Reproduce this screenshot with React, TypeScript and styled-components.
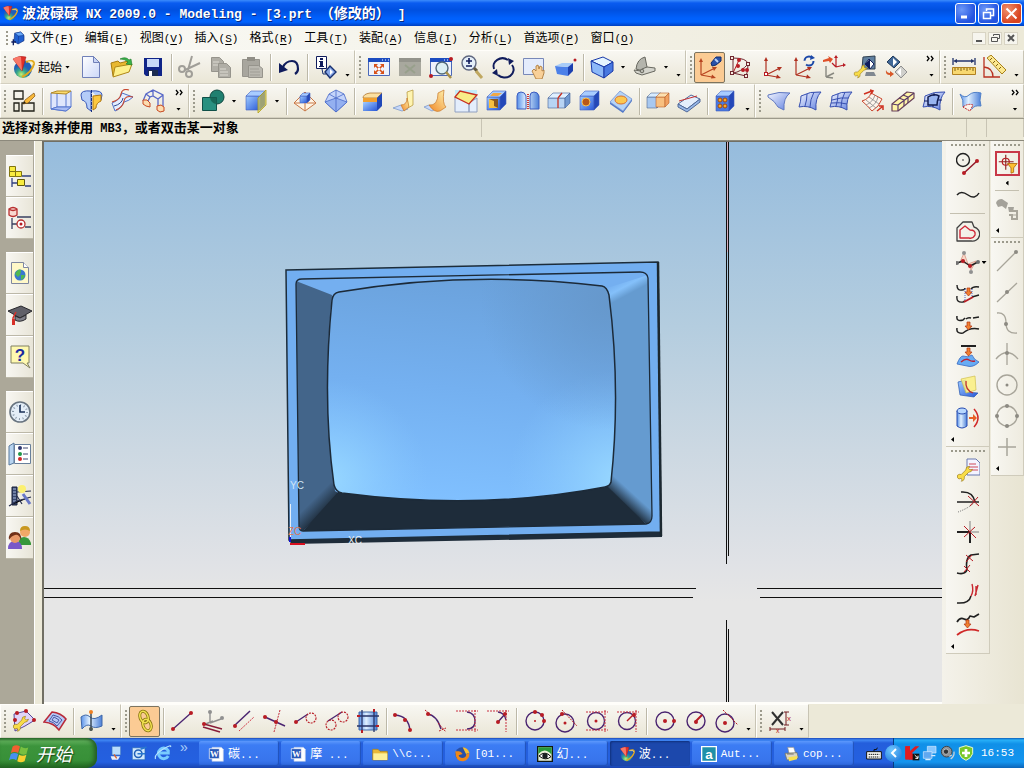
import React from 'react';
import styled, { createGlobalStyle, css } from 'styled-components';

const Global = createGlobalStyle`
  * { box-sizing: border-box; }
  html, body { margin: 0; height: 100%; }
  body {
    background: #ece9d8;
    color: #000;
    font-family: "Liberation Mono", "Noto Sans CJK SC", monospace;
    font-size: 12px;
    line-height: 16px;
  }
  #root { height: 100%; }
  button { font: inherit; color: inherit; }
`;

/* ---------- text ---------- */

const CjkText = styled.span<{ $size: number }>`
  font-family: "Noto Sans CJK SC", sans-serif;
  font-size: ${p => p.$size}px;
`;
const LatinText = styled.span<{ $size: number }>`
  font-family: "Liberation Mono", monospace;
  font-size: ${p => p.$size}px;
  white-space: pre;
`;

function Mixed({ text, cjk = 12, latin = 11 }: { text: string; cjk?: number; latin?: number }) {
  const runs = text.match(/[\u0000-\u00ff]+|[^\u0000-\u00ff]+/g) || [];
  return (
    <>
      {runs.map((run, i) =>
        run.charCodeAt(0) < 256 ? (
          <LatinText key={i} $size={latin}>{run}</LatinText>
        ) : (
          <CjkText key={i} $size={cjk}>{run}</CjkText>
        )
      )}
    </>
  );
}

/* ---------- drawing helpers ---------- */

const NAVY = '#101c5c';
const RED = '#b81c24';
const PURPLE = '#4a2470';
const GRAY = '#a8a59a';

type LineProps = { d: string; c?: string; w?: number; f?: string; dash?: string };
const L = ({ d, c = NAVY, w = 1, f = 'none', dash }: LineProps) => (
  <path d={d} stroke={c} strokeWidth={w} fill={f} strokeDasharray={dash} strokeLinejoin="round" />
);
const D = ({ x, y, r = 2, c = RED }: { x: number; y: number; r?: number; c?: string }) => (
  <circle cx={x} cy={y} r={r} fill={c} />
);
const O = ({ x, y, r, c = PURPLE, w = 1.4, f = 'none', dash }: { x: number; y: number; r: number; c?: string; w?: number; f?: string; dash?: string }) => (
  <circle cx={x} cy={y} r={r} stroke={c} strokeWidth={w} fill={f} strokeDasharray={dash} />
);
const Box = ({ x, y, w, h, k = 5, front = 'url(#gBlue)', top = '#a8ccff', side = '#2448b8', line = '#4060c0' }: { x: number; y: number; w: number; h: number; k?: number; front?: string; top?: string; side?: string; line?: string }) => (
  <g stroke={line} strokeWidth=".6" strokeLinejoin="round">
    <path d={`M${x} ${y}h${w}v${h}h${-w}z`} fill={front} />
    <path d={`M${x} ${y}l${k} ${-k}h${w}l${-k} ${k}z`} fill={top} />
    <path d={`M${x + w} ${y}l${k} ${-k}v${h}l${-k} ${k}z`} fill={side} />
  </g>
);
const Win = () => (
  <>
    <path d="M1.5 3.5h21v17h-21z" fill="#eef2fc" stroke="#4a68b8" />
    <path d="M1 3h22v4H1z" fill="#1c4cc0" />
    <path d="M15 5h1M18 5h1M21 5h1" stroke="#fff" />
  </>
);
const Down = ({ x = 12, y = 9 }: { x?: number; y?: number }) => (
  <path d={`M${x - 1} ${y}h3v4h2l-3.500 4l-3.500-4h2z`} fill="#f08030" stroke="#b03010" strokeWidth=".7" />
);
const Wrench = () => (
  <path d="M2 15q-1 4 2 5l3-1q2 3 0 4q5-1 4-6l6-6q4 0 5-4l-3 1l-2-2l1-3q-5 0-5 5l-6 6q-3-1-5 1z" fill="#f8dc48" stroke="#907010" strokeWidth=".8" />
);
const Logo = () => (
  <>
    <circle cx="12" cy="14" r="9" fill="url(#gGlobe)" />
    <path d="M2 4Q8 0 15 2l-4 14z" fill="#e03028" stroke="#a01818" strokeWidth=".5" />
    <path d="M2 4q4-3 8-2l1 14z" fill="#f87868" />
    <path d="M15 7q8-3 8 2q-2 8-12 13" stroke="#e0a820" strokeWidth="2" fill="none" />
    <path d="M17 7q5-1 5 2" stroke="#fff0a0" strokeWidth="1" fill="none" />
  </>
);
const Axes = ({ x = 6, y = 20, c = '#b03020' }: { x?: number; y?: number; c?: string }) => (
  <g stroke={c} fill={c}>
    <path d={`M${x} ${y}V5M${x} ${y}l12-6M${x} ${y}l11 2`} fill="none" strokeWidth="1.2" />
    <path d={`M${x} 2l2 4h-4zM${x + 16} ${y - 8}l-3 4l-2-4zM${x + 15} ${y + 3}l-5 .5l1-4z`} stroke="none" />
  </g>
);

/* ---------- icons, on a 24 unit grid ---------- */

const SHEET = 'M3 7Q12 2 23 3Q17 9 18 21Q10 16 1 18Q3 12 3 7z';

const ICONS: Record<string, React.ReactNode> = {
  logo: <Logo />,
  part: (
    <>
      <path d="M7 5l9-2l5 5v8l-9 5l-6-4z" fill="#2060d0" stroke="#103080" />
      <path d="M7 5l6 4l8-1l-5-5zM13 9l-1 12" fill="#68a8f8" stroke="#103080" strokeWidth=".7" />
      <path d="M2 18h7M5 14v9" stroke="#102060" strokeWidth="2" />
    </>
  ),
  newDoc: (
    <>
      <path d="M3.500 1.500h11l6 6v15h-17z" fill="url(#gPage)" stroke="#7080b8" />
      <path d="M14.500 1.500v6h6z" fill="#c8d4f4" stroke="#7080b8" />
    </>
  ),
  open: (
    <>
      <path d="M1 8l7-2l2 2l8-2v8L3 21z" fill="#e8b830" stroke="#a87c10" />
      <path d="M5 12l17-3l-3 8L3 22z" fill="#fdf08c" stroke="#b08818" />
      <path d="M10 4q6-3 9 1l2-1l1 6l-6-1l2-2q-3-3-8-3z" fill="#38b048" stroke="#1c7828" strokeWidth=".6" />
    </>
  ),
  save: (
    <>
      <path d="M3 3h18v18H5l-2-2z" fill="#102488" />
      <path d="M6 4h12v8H6z" fill="#c8d8f8" />
      <path d="M7 15h10v6H7z" fill="#1c2c50" />
      <path d="M8 16h3v5H8z" fill="#fff" />
    </>
  ),
  cut: (
    <g stroke="#a09e98" fill="none" strokeWidth="2">
      <path d="M14 1L10 15M22 8L7 15" />
      <circle cx="4" cy="14" r="3" />
      <circle cx="11" cy="19" r="3" />
    </g>
  ),
  copy: (
    <g fill="#b0aea6" stroke="#96948c">
      <path d="M2.500 2.500h8l4 4v10h-12z" />
      <path d="M9.500 8.500h8l4 4v10h-12z" />
      <path d="M4 7h6M4 10h5M11 14h6M11 17h8M11 20h8" stroke="#dcdad2" />
    </g>
  ),
  paste: (
    <>
      <path d="M2.500 4.500h17v17h-17z" fill="#a8a69e" stroke="#96948c" />
      <path d="M7 2h8v4H7z" fill="#908e86" />
      <path d="M8.500 10.500h10l4 3v9h-14z" fill="#bab8b0" stroke="#96948c" />
      <path d="M10 14h9M10 17h10M10 20h10" stroke="#a09e96" />
    </>
  ),
  undo: (
    <>
      <path d="M6 12q3-6 9-6t6 8q0 3-3 5" stroke={NAVY} strokeWidth="2.200" fill="none" />
      <path d="M2 8l0 10l9-3z" fill={NAVY} />
    </>
  ),
  info: (
    <>
      <path d="M2.500 1.500h10v12h-10z" fill="#fff" stroke={NAVY} />
      <path d="M6 3h3v2H6zM5 6h4v5h1v1H5v-1h1V7H5z" fill={NAVY} />
      <path d="M16 11l6 6l-6 6l-5-6z" fill="#88a8e8" stroke="#183070" strokeWidth="1.400" />
      <path d="M16 14l3 3l-3 3z" fill="#fff" />
      <path d="M8 14l1 5h3" stroke="#183070" fill="none" />
    </>
  ),
  fit: (
    <>
      <Win />
      <path d="M8 10l8 8M16 10L8 18" stroke="#d85018" strokeWidth="1.600" />
      <path d="M7 9h4l-4 4zM17 9h-4l4 4zM7 19h4l-4-4zM17 19h-4l4-4z" fill="#d85018" />
      <path d="M11 13h2v2h-2z" fill="#fff" />
    </>
  ),
  fitGray: (
    <>
      <path d="M1 3h22v18H1z" fill="#a8a89e" />
      <path d="M1 3h22v4H1z" fill="#94948c" />
      <path d="M7 10l10 8M17 10L7 18" stroke="#98a08c" strokeWidth="2" />
    </>
  ),
  zoomWin: (
    <>
      <Win />
      <circle cx="13" cy="13" r="6" fill="#dcf0f4" stroke="#506878" strokeWidth="1.400" />
      <path d="M17 17l5 6" stroke="#a89048" strokeWidth="2.500" />
      <D x={22} y={4} /><D x={2} y={21} />
    </>
  ),
  zoom: (
    <>
      <circle cx="9" cy="8" r="7" fill="#e4eef8" stroke="#606880" strokeWidth="1.400" />
      <path d="M9 3v6M6 6h6M6 11h6" stroke={NAVY} strokeWidth="1.600" />
      <path d="M14 13l3 3" stroke="#605840" strokeWidth="3" />
      <path d="M16 16l6 7" stroke="#c0a860" strokeWidth="3" />
    </>
  ),
  rotate: (
    <g fill="none" stroke={NAVY} strokeWidth="2">
      <path d="M3 14A9 8 0 0 1 17 5" /><path d="M21 10A9 8 0 0 1 7 20" />
      <path d="M18 10l5-4l-6-3zM6 14l-5 4l6 3z" fill={NAVY} stroke="none" />
    </g>
  ),
  pan: (
    <>
      <path d="M1.500 3.500h20v16h-20z" fill="#e4ecfc" stroke="#7888b8" />
      <path d="M10 16l2-2l2 2v-5l2-1l1 4l1-3l2 1v4l2-1v3l-2 6h-6z" fill="#f8d098" stroke="#a87430" strokeWidth=".8" />
    </>
  ),
  persp: (
    <>
      <path d="M2 11l13 1v9L4 19z" fill="#4c80e8" />
      <path d="M2 11l7-3h11l-5 4z" fill="#a8ccf8" />
      <path d="M15 12l5-4v8l-5 5z" fill="#1c40b0" />
      <D x={22} y={5} r={1.500} />
    </>
  ),
  cube: (
    <g stroke="#1838a8" strokeLinejoin="round">
      <path d="M1 6l12-4l10 5l-9 5z" fill="#e4f4ff" />
      <path d="M1 6l13 6v11L2 17z" fill="#8cb8f8" />
      <path d="M14 12l9-5v9l-9 7z" fill="#4878e0" />
    </g>
  ),
  section: (
    <g stroke="#686860" strokeLinejoin="round">
      <path d="M3 14Q4 4 12 2l2 10l-4 4z" fill="#b4b4ac" />
      <path d="M1 15l2 3l6 2l13-4v-3l-8-1l-5 2l-1 2z" fill="#d4d4cc" />
      <circle cx="9" cy="16" r="1.800" fill="#b8b8b0" />
    </g>
  ),
  wcsTorch: (
    <>
      <g transform="translate(-2 1)"><Axes x={5} y={19} c="#b84420" /></g>
      <path d="M13 8l5-6h5v4l-5 4l-4 1z" fill="#2850a8" stroke="#102c70" />
      <path d="M17 4l3 3" stroke="#b8d0f8" strokeWidth="2" />
    </>
  ),
  wcsDyn: (
    <>
      <L d="M4 18V3M4 18l13 3M4 3q14 0 15 6q0 8-2 12M4 18q8-1 15-9" c="#702830" />
      <L d="M4 18l6-13" c={RED} />
      {[[3, 3], [3, 18], [19, 9], [17, 21]].map(([x, y]) => <rect key={`${x}${y}`} x={x - 1.5} y={y - 1.5} width="3" height="3" fill="#f8ece0" stroke="#702830" />)}
      <D x={10} y={5} /><D x={14} y={15} /><D x={9} y={11} /><D x={18} y={15} />
    </>
  ),
  wcs: <><Axes /><rect x="4.5" y="17.500" width="3" height="3" fill="#fff" stroke={RED} /></>,
  wcsRot: (
    <>
      <Axes x={5} />
      <circle cx="18" cy="6" r="4.500" fill="none" stroke="#1c48a8" strokeWidth="2" strokeDasharray="10 4" />
      <path d="M20 0l4 3l-5 2z" fill="#1c48a8" />
    </>
  ),
  wcsMove: (
    <>
      <L d="M14 12V2M14 12l8-2M14 12l-4-4" c={RED} w={1.200} />
      <path d="M12 3l2-3l2 3zM21 8l3 2l-3 2z" fill={RED} />
      <path d="M1 5l6-2l-1-2l5 3l-3 4l-1-2l-6 1z" fill="#e05028" />
      <L d="M4 22V11M4 22l8-4M4 22l7 1" c="#888880" w={1.400} />
    </>
  ),
  wcsTool: (
    <>
      <path d="M10 2l12-1v13H9z" fill="#6080a0" stroke="#304050" />
      <path d="M13 17h8l2 4H12z" fill="#808890" />
      <path d="M16 4l5 5l-4 5l-5-5z" fill="#fff" stroke={NAVY} /><path d="M17 4v10l-5-5z" fill={NAVY} />
      <g transform="translate(0 8) scale(.65)"><Wrench /></g>
    </>
  ),
  layer: (
    <>
      <path d="M9 1l7 6l-6 6l-7-6z" fill="#406898" stroke="#203858" /><path d="M9 3l4 4l-4 4z" fill="#fff" />
      <path d="M17 11l6 6l-6 6l-6-6z" fill="#d0d0cc" stroke="#909090" /><path d="M17 13v8l-4-4z" fill="#fff" />
      <path d="M2 15q1 3 4 3v-2l4 3l-4 3v-2q-5 0-4-5z" fill="#d85828" />
    </>
  ),
  measure: (
    <>
      <path d="M1 3v7M23 3v7M3 6h18" stroke="#24346c" strokeWidth="1.300" /><path d="M1 6l4-2v4zM23 6l-4-2v4z" fill="#24346c" />
      <path d="M.5 12.500h23v7H.5z" fill="#f8d870" stroke="#b08020" />
      <path d="M3 13v3M6 13v2M9 13v3M12 13v2M15 13v3M18 13v2M21 13v3" stroke="#806010" />
    </>
  ),
  angle: (
    <>
      <path d="M1 2v20h16M1 12q9 1 9 10" stroke="#b83020" fill="none" strokeWidth="1.300" />
      <path d="M4 3l4-3l15 15l-4 4z" fill="#fce890" stroke="#a88018" />
      <path d="M9 3l-2 2M12 6l-2 2M15 9l-2 2M18 12l-2 2" stroke="#806010" />
    </>
  ),
  sketch: (
    <>
      <g fill="none" stroke="#202018" strokeWidth="1.300"><path d="M2 2h9v8H2zM2 14h5v8H2zM10 14h12v8H10z" /></g>
      <path d="M22 4l-9 7l-2 4l5-1l7-7z" fill="#f8b838" stroke="#805010" strokeWidth=".7" /><path d="M11 15l1-3l2 2z" fill="#202018" />
    </>
  ),
  extrude: (
    <>
      <path d="M2 19V4l15 1l5-3v16l-5 4z" fill="#dfe6fc" />
      <path d="M2 4v16l15 2V5M22 2v16l-5 4M8 3v15h14M8 18l-6 2" stroke="#5878d0" fill="none" />
      <path d="M2 4l6-2h14l-5 3z" fill="#fcdc70" stroke="#b08828" />
      <path d="M2 20l15 2l5-4H8z" fill="#a8bcf4" stroke="#5878d0" />
    </>
  ),
  revolve: (
    <>
      <path d="M11 2Q1 1 1 6l1 5q5 1 5 8l4 3zM11 2q11-1 11 4l-1 5" fill="#b4ccf8" stroke="#3858b8" />
      <path d="M13 7l8-1v6q-5 2-5 7l-3 2z" fill="#fcc840" stroke="#b07810" />
      <path d="M11.500 1v22" stroke="#183080" strokeDasharray="3 1" />
    </>
  ),
  sweep: (
    <>
      <path d="M1 14Q9 11 11 4l11 4q-4 4-9 5q-3 7-9 9z" fill="#e4eeff" stroke="#5070c8" />
      <path d="M1 13q8-2 9-8t8-4M5 21q7-3 8-9t9-4" stroke="#c84830" fill="none" strokeWidth="1.200" />
      <path d="M3 17q8-2 9-8" stroke="#304890" fill="none" />
    </>
  ),
  tube: (
    <>
      <path d="M1 12l3-7l7-4l10 5v12M6 12l2-4l3-1l5 3v8M4 5l4 3M11 1v6M21 6l-5 4" fill="none" stroke="#5868c8" strokeWidth="1.300" />
      <path d="M1 11h4l3 3v4l-4-1l-3-2zM15 17l4-1l3 2v4l-4 1l-3-2z" fill="#fcdcb0" stroke="#c84820" />
    </>
  ),
  unite: (
    <>
      <circle cx="16" cy="8" r="7" fill="#208070" stroke="#104840" />
      <path d="M1.500 8.500h14v13h-14z" fill="#289080" stroke="#105048" />
      <path d="M9 8.500h6.500V15A7 7 0 0 1 9 8.500z" fill="#186858" />
    </>
  ),
  trimBody: (
    <>
      <Box x={2} y={7} w={14} h={14} k={5} />
      <path d="M14 24l8-8V1l-8 8z" fill="#f0e048" fillOpacity=".6" stroke="#b0a018" strokeWidth=".8" />
    </>
  ),
  emboss: (
    <>
      <path d="M1 14L12 3l11 11l-11 8z" fill="#fff4e4" stroke="#c87848" />
      <Box x={7} y={7} w={7} h={7} k={3} />
      <path d="M1 14l6 0M14 14h9M12 22v-8" stroke="#c87848" />
    </>
  ),
  facet: (
    <g stroke="#4868c8" strokeLinejoin="round" strokeWidth=".8">
      <path d="M12 1l8 4l3 8l-11 10L1 13l4-8z" fill="#c4d4fa" />
      <path d="M1 13l11-4l11 4l-11 10z" fill="#94b0f0" />
      <path d="M12 1v22M5 5l7 4l8-4" fill="none" />
    </g>
  ),
  blend: (
    <>
      <path d="M2 9q0-4 7-5h12l-5 5z" fill="#fce0a0" stroke="#a86820" strokeWidth=".7" />
      <path d="M2 9h14v4H2z" fill="#f0a030" /><path d="M2 13h14v9H2z" fill="url(#gBlue)" />
      <path d="M16 9l5-5v13l-5 5z" fill="#2048b8" />
    </>
  ),
  faceBlend: (
    <>
      <path d="M1 19l8-3l7 4l-6 2z" fill="#c8d8f8" stroke="#7090c8" strokeWidth=".7" />
      <path d="M15 3l6-2v15l-5 3z" fill="#fff4b0" stroke="#b09030" strokeWidth=".7" />
      <path d="M9 16q6 0 6-7l2 9l-5 4z" fill="url(#gOrange)" stroke="#c87828" strokeWidth=".7" />
    </>
  ),
  softBlend: (
    <>
      <path d="M1 18l5-2l7 4l-4 2z" fill="#c8d8f8" stroke="#7090c8" strokeWidth=".7" />
      <path d="M6 16q9 1 9-12l6-3q-2 14 2 17l-6 4q-6 2-11-6z" fill="url(#gOrange)" stroke="#c87828" strokeWidth=".7" />
    </>
  ),
  chamfer: (
    <>
      <path d="M1 1h22v22H1z" fill="#c4ecf8" />
      <path d="M1 8v15h14V14zM15 14v9h8V9z" fill="#e4eefc" stroke="#90a0c0" />
      <path d="M1 8L6 2l17 4l-8 9z" fill="#f8ec88" stroke="#c83020" strokeWidth="1.300" />
    </>
  ),
  shell: (
    <>
      <Box x={2} y={8} w={13} h={13} k={6} />
      <path d="M4 10h9v9H4z" fill="#8a5820" /><path d="M4 10l5 2v5l4 2H4z" fill="#f8c040" /><path d="M8 4h9l-4 3H5z" fill="#f0a848" />
    </>
  ),
  thread: (
    <>
      <path d="M1 20V7q0-4 4-4t5 4v13zM14 20V7q0-4 4-4t5 4v13z" fill="url(#gCyl)" stroke="#3c5cc0" />
      <path d="M12 5v16" stroke="#d03838" strokeWidth="2" strokeDasharray="1 1" />
    </>
  ),
  patternBox: (
    <>
      <Box x={1} y={9} w={17} h={10} k={5} front="#b8d4f4" top="#e0f0ff" side="#7098d0" line="#406098" />
      <path d="M11 9v10M11 9l4-5" stroke="#c83020" strokeWidth="1.300" />
    </>
  ),
  hole: <><Box x={2} y={7} w={14} h={14} k={5} /><circle cx="8" cy="13" r="4" fill="#b85818" stroke="#f8c050" /></>,
  boss: (
    <>
      <path d="M1 13l13 9l9-12v2l-9 12L1 15z" fill="#5078c8" />
      <path d="M1 13L11 2l12 8l-9 12z" fill="#b4d4f8" stroke="#6888d0" strokeWidth=".7" />
      <ellipse cx="12" cy="11" rx="6" ry="4" fill="#fcc850" stroke="#d87030" />
    </>
  ),
  replace: (
    <>
      <Box x={1} y={8} w={10} h={11} k={4} front="#a8c8f0" top="#d8ecff" side="#88b0e8" line="#506890" />
      <Box x={10} y={8} w={9} h={10} k={4} front="#f8c080" top="#fce0b0" side="#f0a060" line="#b86028" />
    </>
  ),
  offset: (
    <g stroke="#506898" strokeLinejoin="round">
      <path d="M1 15l13-9l9 4l-13 10z" fill="#e4eefc" /><path d="M1 15v3l9 5l13-10v-3L10 20z" fill="#98b8e8" />
      <path d="M2 12l18-5" stroke="#c83030" />
    </g>
  ),
  feature: (
    <>
      <Box x={2} y={7} w={13} h={15} k={5} front="#4878e0" />
      {[[6, 11], [11, 11], [6, 17], [11, 17]].map(([x, y]) => <circle key={`${x}-${y}`} cx={x} cy={y} r="2" fill="#f8a828" stroke="#a04810" />)}
    </>
  ),
  ruled: <path d="M1 6Q12 2 23 4Q16 9 17 21l-6-3Q8 12 1 8z" fill="url(#gSurf)" stroke="#6078c0" />,
  curves: <><path d={SHEET} fill="url(#gSurf)" stroke="#3850b0" /><L d="M9 5q0 6-2 12M16 3q-4 8-4 15" c="#3850b0" /></>,
  mesh: <><path d={SHEET} fill="url(#gSurf)" stroke="#3850b0" /><L d="M9 5q0 6-2 12M16 3q-4 8-4 15M3 11q10-3 16-2M2 14q9-1 16 1" c="#3850b0" /></>,
  swept: (
    <>
      <path d="M2 12q7-2 9-8l11 6q-3 8-10 12q-4-5-10-10z" fill="#fdf4ec" stroke="#c84830" />
      <L d="M6 11l10 8M9 8l10 7M6 16q7-3 9-10M9 19q7-3 9-11" c="#888" w={0.800} />
      <path d="M4 5l8-3M10 1l3 1l-2 3M17 22l5-4M19 17l4 0v4" stroke="#d03020" fill="none" strokeWidth="1.500" />
    </>
  ),
  lattice: (
    <g strokeWidth="1.200" strokeLinejoin="round">
      <path d="M1 15L16 3l7 1v5L7 22H1z" fill="#fff4a8" stroke="#684058" />
      <path d="M1 15l6 1l16-12M7 16v6M8 9l5 2v6M12 6l5 2v6" fill="none" stroke="#583868" />
    </g>
  ),
  studio: <><path d={SHEET} fill="url(#gSurf)" stroke="#3850b0" /><path d="M6 16V8q6-4 11-1q-2 5-2 9z" fill="#98b4f0" stroke="#101c50" strokeWidth="1.500" /><L d="M2 12h4M16 11h4M12 4v3M11 16v2" /></>,
  trimSheet: (
    <>
      <path d="M1 5q5 5 9 1t12-2q-2 8 0 13q-7-1-9 3L4 18Q5 11 1 5z" fill="url(#gCyl)" stroke="#5080c8" />
      <path d="M4 18q5-4 10-2l-3 6z" fill="#fcf4ec" stroke="#c02828" strokeDasharray="2 1" />
    </>
  ),
  /* resource tabs */
  navAsm: (
    <>
      <path d="M1.500 2.500h6v5h-6zM1.500 7.500h6v5h-6zM7.500 7.500h6v5h-6z" fill="#f8ec40" stroke="#807410" />
      <path d="M14 12h9M4 14v9M4 19h5M17 22h6" stroke="#304080" strokeWidth="1.300" /><path d="M9.500 15.500h7v6h-7z" fill="#f8ec40" stroke="#605810" />
    </>
  ),
  navPart: (
    <>
      <path d="M1 3v6q4 3 8 0V3q-4-3-8 0q4 3 8 0" fill="#f8d8d0" stroke="#b83030" strokeWidth="1.300" />
      <path d="M9 11h14M4 12v11M4 18h5M17 21h6" stroke="#384060" strokeWidth="1.300" />
      <circle cx="13" cy="18" r="4" fill="#fff" stroke="#b83030" strokeWidth="1.300" /><D x={13} y={18} r={1.500} />
    </>
  ),
  web: (
    <>
      <path d="M3.500 1.500h12l5 5v16h-17z" fill="#fff8c8" stroke="#8088a0" /><path d="M15.500 1.500v5h5" fill="#fff" stroke="#8088a0" />
      <circle cx="12" cy="14" r="5.500" fill="#3878d0" /><path d="M7 13q3-6 6-4q0 5-3 7zM13 14l4 0q-1 4-4 5z" fill="#50b850" />
    </>
  ),
  grad: (
    <>
      <path d="M0 8l13-5l11 5l-12 7z" fill="#606068" stroke="#28282c" /><path d="M7 13v4q5 3 11-1v-4l-6 3z" fill="#808088" stroke="#28282c" />
      <path d="M8 9l-3 6v6" stroke="#d83028" strokeWidth="1.500" fill="none" /><path d="M4 16h3v6H4z" fill="#d83028" />
    </>
  ),
  help: (
    <>
      <path d="M3 1h18v17h-2l3 5l-7-5H3z" fill="#fff9b0" stroke="#808060" strokeLinejoin="round" />
      <text x="12" y="16" textAnchor="middle" fontFamily="Liberation Sans" fontSize="17" fontWeight="700" fill="#1c2ca0">?</text>
    </>
  ),
  clock: (
    <>
      <circle cx="12" cy="12" r="10" fill="#e4eef8" stroke="#687480" strokeWidth="1.600" />
      <circle cx="12" cy="12" r="7" fill="none" stroke="#8898a8" strokeDasharray="1 2.660" strokeWidth="2" />
      <path d="M12 5v7h5" stroke="#183058" strokeWidth="1.600" fill="none" />
    </>
  ),
  palette: (
    <>
      <path d="M1 4l5-3v20l-5 2z" fill="#b8d4f0" stroke="#58789c" /><path d="M6.500 2.500h16v19h-16z" fill="#fff" stroke="#68809c" />
      <D x={12} y={6} c="#303870" /><D x={12} y={12} c="#209848" /><D x={12} y={17} c="#d02828" /><path d="M15 6h5M15 12h5M15 17h5" stroke="#404870" />
    </>
  ),
  film: (
    <>
      <path d="M4 3h5v18H4z" fill="#384870" stroke="#182038" /><path d="M5 5h3M5 8h3M5 11h3M5 14h3M5 17h3" stroke="#a8b8d8" />
      <path d="M9 8l14-1M1 22l8-5l14-4M9 12l5 8" stroke="#283050" strokeWidth="1.200" />
      <circle cx="14" cy="5" r="4" fill="#fcf070" /><path d="M15 10l7 10" stroke="#6878c8" strokeWidth="3" />
    </>
  ),
  people: (
    <>
      <path d="M10 17q1-6 6-6t7 6v2H10z" fill="#38983c" /><circle cx="17" cy="6" r="5" fill="#f0a868" /><path d="M12 5q0-5 5-5t5 5q-5-3-10 0z" fill="#c89820" />
      <path d="M0 23q0-8 7-8t7 8z" fill="#7858c8" /><circle cx="7" cy="12" r="5" fill="#e89868" /><path d="M1 14q-1-8 6-8t6 8q-2-6-6-5t-6 5z" fill="#703018" />
    </>
  ),
  /* right dock */
  profile: <><O x={7} y={8} r={6.500} c="#202020" /><D x={7} y={8} r={0.800} c="#202020" /><L d="M8 21L21 9" c="#901828" w={1.500} /><D x={8} y={21} c={RED} /><D x={21} y={9} /></>,
  spline: <L d="M1 12Q5 7 12 12T23 10" c="#202020" w={1.500} />,
  offsetCrv: <><L d="M1 8v13h14a7 7 0 0 0 3-14L16 2H7z" c="#404040" w={1.300} /><L d="M4 18V10l5-4l5 4q6 0 5 5q-2 4-6 3z" c="#d02838" w={1.400} /></>,
  poly: <><path d="M8 2l-4 9l8 2zM12 13l3 6l5-9z" fill="#f8d8c8" stroke="#c87868" strokeWidth=".6" /><L d="M1 12l6-2l7 5l8-4" c="#202020" w={1.400} /><D x={8} y={2} c="#909090" /><D x={1} y={12} c="#707070" /><D x={7} y={10} /><D x={14} y={15} /><D x={15} y={21} c="#909090" /><D x={22} y={11} c="#707070" /></>,
  bridge: <><L d="M1 3q0 6 5 5q3 0 3-2M15 7q2-3 8-2M1 14q-1 7 6 6l2-1M16 15l7-2" c="#202020" w={1.400} /><L d="M9 7v12M16 7v8" c="#4868d0" dash="1 1" /><L d="M8 20l9-5" c={RED} w={2} /><Down x={12} y={6} /></>,
  join: <><L d="M1 3q-1 6 6 4l2-2M10 6q2-2 5-1M17 5l6-1M1 15q-1 6 6 5q7-6 16-4" c="#202020" w={1.500} /><Down x={12} y={9} /></>,
  project: <><path d="M1 20q3-8 6-8q5 2 9-1q2 5 7 7q-6 6-12 4q-5-1-10-2z" fill="#68acf4" stroke="#3868c0" strokeWidth=".8" /><L d="M5 2h15" c="#202020" w={2} /><L d="M5 18q5-4 8-2t6 1" c="#c02030" w={1.500} /><Down x={12} y={4} /></>,
  intersect: <><path d="M2 7l8-2v12l12 1l-4 4L4 20z" fill="url(#gBlue)" stroke="#2858b0" strokeWidth=".7" /><path d="M5 4l14-3l1 14l-10 3z" fill="#fcf080" fillOpacity=".85" stroke="#d0c050" strokeWidth=".7" /><L d="M10 6q-1 9 7 12" c="#c03030" w={1.300} /></>,
  wrap: <><path d="M1 5q5-5 10 0v15q-5 4-10 0z" fill="url(#gCyl)" stroke="#284cb0" /><ellipse cx="6" cy="5" rx="5" ry="3" fill="#b8d8ff" stroke="#284cb0" /><path d="M13 11h4V8l4 4l-4 4v-3h-4z" fill="#e86028" /><L d="M18 3q8 9 0 18" c="#d02828" w={1.500} /></>,
  editParam: <><path d="M11 1h9l4 4v12H11z" fill="#f4f4ff" stroke="#6878b0" /><path d="M13 6h7M13 9h9M13 12h9" stroke="#d04858" /><g transform="translate(0 6) scale(.75)"><Wrench /></g></>,
  trimCrv: <><L d="M5 3q12-1 14 10M1 13h22" c="#202020" w={1.500} /><L d="M2 23q11-4 17-10" c="#707070" dash="1 1" /><L d="M12 7l11 10M22 8l-8 9" c={RED} /></>,
  trimCor: <><L d="M1 12h13v11" c="#202020" w={2} /><L d="M14 12V1M14 12h9" c="#808080" /><L d="M8 6l12 12M19 7L8 17" c={RED} /></>,
  divide: <><L d="M1 22q8 2 10-3q-2-12 4-15l8-1" c="#202020" w={1.600} /><L d="M10 4l7 6M16 4l-6 7M8 15l6 6M14 14l-6 7" c={RED} /></>,
  length: <><L d="M1 21q12 1 14-7" c="#202020" w={1.500} /><L d="M15 14q3-5 1-12M20 4v9M22 3l-3 11" c="#c82830" w={1.400} /></>,
  smooth: <><L d="M1 9q3-5 7-3t6-3l4 1l5-3" c="#202020" w={1.700} /><Down x={11} y={7} /><L d="M1 22q10-8 22-4" c="#d02828" w={1.800} /></>,
  filter: <><L d="M10 2v17M2 10h17" c="#8c2020" w={1.300} /><O x={10} y={10} r={4} c={RED} /><path d="M12 12h11l-4 5v5l-3 1v-6z" fill="#fcc030" stroke="#b07010" /></>,
  gunGray: <><path d="M1 6q1-4 6-4l6 4l-2 6l-4-3l-4 1zM13 10h6l-1 5h-4z" fill="#a4a29a" /><path d="M15 14h7v8h-5v-4h-3" fill="none" stroke={GRAY} strokeWidth="2" /><path d="M17 18h5" stroke={GRAY} /></>,
  gEnd: <><L d="M2 22L21 3" c={GRAY} w={1.300} /><D x={21} y={3} c="#8c8a82" /></>,
  gMid: <><L d="M2 22L22 3" c={GRAY} w={1.300} /><D x={12} y={12} c="#8c8a82" /></>,
  gCtrl: <><L d="M2 2q9-1 9 10t11 10" c={GRAY} w={1.300} /><D x={11} y={13} c="#8c8a82" /></>,
  gInt: <><L d="M12 1v22M1 17q11-13 22 0" c={GRAY} w={1.300} /><D x={12} y={11} c="#8c8a82" /></>,
  gCen: <><O x={12} y={12} r={10} c={GRAY} /><D x={12} y={12} r={1.500} c="#8c8a82" /></>,
  gQuad: <><O x={12} y={12} r={10} c={GRAY} /><D x={12} y={2} c="#8c8a82" /><D x={12} y={22} c="#8c8a82" /><D x={2} y={12} c="#8c8a82" /><D x={22} y={12} c="#8c8a82" /></>,
  gPt: <L d="M12 3v18M3 12h18" c={GRAY} w={1.500} />,
  /* bottom bar */
  btSpline: <><path d="M2 5l12-3l9 9l-10 6l-10 5z" fill="#e0d4f8" stroke="#584898" /><D x={5} y={4} /><D x={14} y={2} /><D x={22} y={11} /><D x={3} y={11} /><g transform="translate(0 5) scale(.75)"><Wrench /></g></>,
  btSheet: <><path d="M1 13L9 3q9 1 14 7l-7 11Q11 14 1 13z" fill="#b8c8f4" stroke="#b82838" strokeWidth="1.500" /><L d="M6 12l4-6q6 1 9 5l-5 6q-3-4-8-5zM9 11l2-3l5 3l-2 3z" c="#4858a8" /></>,
  btMap: <><path d="M1 8q5-4 9 0t12-2v11q-7 3-11 0T2 20z" fill="url(#gCyl)" stroke="#4068a8" /><L d="M11 3v19" c="#384858" w={1.500} /><D x={11} y={3} c="#f08020" /><D x={11} y={20} c="#505850" /></>,
  chain: (
    <g fill="none" stroke="#86740c" strokeWidth="3"><ellipse cx="11" cy="8" rx="4" ry="6" transform="rotate(-20 11 8)" /><ellipse cx="14" cy="16" rx="4" ry="6" transform="rotate(-20 14 16)" />
      <g stroke="#f0e050" strokeWidth="1.500"><ellipse cx="11" cy="8" rx="4" ry="6" transform="rotate(-20 11 8)" /><ellipse cx="14" cy="16" rx="4" ry="6" transform="rotate(-20 14 16)" /></g></g>
  ),
  line: <><L d="M3 20L21 4" c={PURPLE} w={1.400} /><D x={3} y={20} /><D x={21} y={4} /></>,
  lineAxis: <><L d="M9 14V4M9 14l11-4M2 16l10-4" c="#909090" w={1.400} /><D x={9} y={3} c="#909090" /><D x={21} y={9} c="#909090" /><L d="M3 15l18 5M2 18l17 5" c="#881c38" w={1.400} /><D x={3} y={15} /></>,
  linePar: <><L d="M2 17L18 2" c={PURPLE} w={1.500} /><D x={3} y={17} /><L d="M7 22L22 8" c="#d03848" dash="2 1" /></>,
  lineCross: <><L d="M2 8l20 9" c={PURPLE} w={1.400} /><D x={2} y={8} /><L d="M17 1l-6 22" c="#c02838" dash="2 1" /><D x={13} y={13} /></>,
  lineTan: <><L d="M2 13L14 5" c={PURPLE} w={1.400} /><D x={2} y={13} /><O x={17} y={9} r={5} c={RED} w={1.100} dash="2 1" /></>,
  lineTan2: <><L d="M3 12L17 3" c={PURPLE} w={1.400} /><O x={6} y={16} r={5} c={RED} w={1.100} dash="2 1" /><O x={18} y={8} r={5} c={RED} w={1.100} dash="2 1" /></>,
  grid: <><path d="M3 3h18v18H3z" fill="url(#gCyl)" stroke="#4068a8" /><L d="M6 1v22M18 1v22M1 7h22M1 17h22" c="#283468" w={1.300} /><L d="M1 7h3M20 17h3M6 21v3M18 0v3" c={RED} w={2} /></>,
  arc3: <><L d="M2 6q14 1 15 16" c={PURPLE} w={1.400} /><D x={2} y={6} /><D x={12} y={11} /><D x={17} y={21} /></>,
  arcTan: <><L d="M3 5q10 1 14 15" c={PURPLE} w={1.400} /><D x={4} y={5} /><L d="M1 1l6 5M14 14l8 9M15 22l7-3" c={RED} dash="2 1" /></>,
  arc3Tan: <><L d="M12 3q8 1 8 9t-8 8" c={PURPLE} w={1.400} /><L d="M1 2h22M1 21h22M20 1v22" c="#c83040" dash="2 1" /></>,
  arcCor: <><L d="M12 13l7-8M12 3q7 1 8 8" c={PURPLE} w={1.400} /><L d="M1 2h22M20 1v22" c="#c83040" dash="2 1" /><D x={12} y={13} /><D x={19} y={5} /></>,
  circ3: <><O x={12} y={12} r={9} /><D x={12} y={12} r={1} /><D x={12} y={3} /><D x={21} y={12} /><D x={19} y={6} /></>,
  circTan: <><O x={11} y={14} r={9} /><D x={11} y={14} r={1.500} /><D x={8} y={5} /><L d="M8 1l15 16" c={RED} dash="2 1" /></>,
  circBox: <><O x={11} y={12} r={8.500} /><D x={11} y={12} r={1.500} /><L d="M1 3h22M1 21h22M20 1v22" c="#c83040" dash="2 1" /></>,
  circRad: <><O x={11} y={12} r={8.500} /><L d="M11 12l8-8" c={RED} w={1.500} /><D x={18} y={6} /><L d="M1 3h22M20 1v22" c="#c83040" dash="2 1" /></>,
  circPt: <><O x={12} y={12} r={9} /><D x={12} y={12} /><D x={21} y={12} /></>,
  circR: <><O x={12} y={12} r={9} /><L d="M11 13l7-7" c={RED} w={2} /><D x={12} y={13} /></>,
  circT: <><O x={10} y={14} r={9} /><D x={10} y={14} /><L d="M8 1l15 15" c={RED} dash="2 1" /></>,
  dimX: <><L d="M4 3l11 13M15 3L4 16" c="#303030" w={2} /><L d="M18 3v13M16 3h5M16 16h5M2 20h15M2 18v4M17 18v4" c="#701c20" /><text x="19" y="12" fontSize="8" fill={RED} fontFamily="Liberation Sans">x</text><text x="8" y="24" fontSize="7" fill={RED} fontFamily="Liberation Sans">x</text></>,
  /* taskbar */
  flag: (
    <>
      <path d="M4 5q4-3 8 0l-2 7q-4-2-8 0z" fill="#f06030" /><path d="M13 5q4 3 8 1l-2 7q-4 2-8-1z" fill="#78c040" />
      <path d="M2 13q4-2 8 0l-2 7q-4-3-8 0z" fill="#4890f0" /><path d="M11 14q4 2 8 0l-2 7q-4 2-8 0z" fill="#f8d030" />
    </>
  ),
  desk: <><path d="M6 2h13v13H6z" fill="#b8dcfc" stroke="#3870c0" /><path d="M4 17h14l-3 5H6z" fill="#e8eef8" /><path d="M9 14l4 6" stroke="#d86030" strokeWidth="2" /></>,
  mail: <><path d="M3 5h17v16H3z" fill="#d0e8fc" stroke="#2868b8" /><circle cx="11" cy="13" r="5" fill="none" stroke="#2060b8" strokeWidth="2" /><path d="M10 13h10M14 7l8-3" stroke="#2878d0" strokeWidth="2" /></>,
  ie: <><path d="M19 16a7 7 0 1 1 0-7v3H8" fill="none" stroke="#78ccff" strokeWidth="4" /><path d="M2 20Q0 14 12 7t10-3" fill="none" stroke="#b8e4ff" strokeWidth="1.500" /></>,
  word: <><path d="M6 2h14l3 3v18H6z" fill="#fff" stroke="#b0c4e8" /><path d="M2 4h15v15H2z" fill="#2858b8" stroke="#fff" /><text x="9.500" y="16" textAnchor="middle" fontFamily="Liberation Serif" fontWeight="700" fontSize="13" fill="#fff">W</text></>,
  folder: <><path d="M1 5h8l3 3h11v13H1z" fill="#e8b838" stroke="#a87c10" /><path d="M2 11h21v10H2z" fill="#fdf098" /></>,
  fox: <><circle cx="12" cy="12" r="10" fill="#2850a8" /><path d="M2 8q0 16 12 15q10-2 9-14q-2 4-5 3q1 5-5 6q-5 0-6-4l6-2q-3-5-7-4z" fill="#f08818" /><path d="M13 2q8 1 10 8l-5 2z" fill="#f8c030" /></>,
  eye: <><path d="M1 1h22v22H1z" fill="#e8f0d8" stroke="#101810" strokeWidth="2" /><path d="M2 2h20v11Q11 1 2 12z" fill="#289838" /><path d="M3 15q9-9 18 1q-8 7-18-1z" fill="#fff" stroke="#101010" strokeWidth="1.500" /><circle cx="12" cy="15" r="4" fill="#182020" /></>,
  aBox: <><path d="M1 1h22v22H1z" fill="#2090a8" stroke="#fff" strokeWidth="2" /><text x="12" y="19" textAnchor="middle" fontFamily="Liberation Sans" fontWeight="700" fontSize="20" fill="#fff">a</text></>,
  printer: <><path d="M7 2h9l3 9H9z" fill="#fff" stroke="#888" /><path d="M3 11l18-1l2 8l-17 3z" fill="#d8d4c4" stroke="#706c58" /><path d="M8 17l13-2v5l-12 3z" fill="#f8e050" /><path d="M6 12h10" stroke="#484848" /></>,
  keyboard: <><path d="M1 10h22v11H1z" fill="#f8f8f4" stroke="#101010" strokeWidth="1.500" /><path d="M4 14h16M4 18h16" stroke="#101010" strokeWidth="1.500" strokeDasharray="2 1" /><path d="M12 10V7q5 1 5-3" stroke="#101010" strokeWidth="1.500" fill="none" /></>,
  kav: <><path d="M2 2h7v7l8-7h6L12 12l10 10H8V15l-6 6z" fill="#e01c20" /><path d="M2 2h7v20H2z" fill="#e01c20" /><path d="M13 13h10v10H13z" fill="#101010" /><path d="M16 15l5 5M21 16v4h-4" stroke="#fff" strokeWidth="1.500" fill="none" /></>,
  net: <><path d="M8 2h13v10H8z" fill="#88c8ff" stroke="#d8ecff" /><path d="M2 10h13v10H2z" fill="#60a8f0" stroke="#d8ecff" /><path d="M5 22h8M14 16h6" stroke="#d8ecff" strokeWidth="2" /></>,
  volume: <><circle cx="10" cy="10" r="8" fill="#909498" stroke="#404448" strokeWidth="1.500" /><circle cx="9" cy="10" r="4" fill="#303438" stroke="#d8dce0" /><path d="M16 21q6-4 5-11M14 17l4-2" stroke="#c8d0d8" fill="none" strokeWidth="2" /></>,
  shield: <><path d="M12 1l10 3v9q-2 7-10 10Q4 20 2 13V4z" fill="#78c828" stroke="#e8f8d0" strokeWidth="1.500" /><path d="M12 6v12M6 12h12" stroke="#fff" strokeWidth="4" /></>,
};

const Svg = styled.svg<{ $s: number }>`
  display: block;
  flex: none;
  width: ${p => p.$s}px;
  height: ${p => p.$s}px;
`;
const Icon = ({ name, size = 24 }: { name: string; size?: number }) => (
  <Svg $s={size} viewBox="0 0 24 24" aria-hidden="true">{ICONS[name]}</Svg>
);

const Defs = styled.svg`
  position: absolute;
  width: 0;
  height: 0;
`;
const SharedDefs = () => (
  <Defs aria-hidden="true">
    <defs>
      <linearGradient id="gBlue" x1="0" y1="0" x2="1" y2="1"><stop offset="0" stopColor="#a0ccff" /><stop offset="1" stopColor="#2858d8" /></linearGradient>
      <linearGradient id="gPage" x1="0" y1="0" x2="1" y2="1"><stop offset="0" stopColor="#fff" /><stop offset="1" stopColor="#ccd8f8" /></linearGradient>
      <linearGradient id="gSurf" x1="0" y1="0" x2="1" y2="1"><stop offset="0" stopColor="#f4f6ff" /><stop offset="1" stopColor="#6080e0" /></linearGradient>
      <linearGradient id="gOrange" x1="0" y1="1" x2="1" y2="0"><stop offset="0" stopColor="#f08828" /><stop offset="1" stopColor="#fff4b0" /></linearGradient>
      <linearGradient id="gCyl" x1="0" y1="0" x2="1" y2="0"><stop offset="0" stopColor="#5890e8" /><stop offset=".4" stopColor="#e0f0ff" /><stop offset="1" stopColor="#4c80d8" /></linearGradient>
      <radialGradient id="gGlobe" cx=".4" cy=".8"><stop offset="0" stopColor="#c8f070" /><stop offset=".5" stopColor="#38a888" /><stop offset="1" stopColor="#2060b8" /></radialGradient>
    </defs>
  </Defs>
);

/* ---------- frame ---------- */

const Screen = styled.div`
  display: flex;
  flex-direction: column;
  min-height: 100%;
`;

const TitleBar = styled.header`
  display: flex;
  align-items: center;
  height: 26px;
  padding: 0 2px;
  color: #fff;
  font-weight: 700;
  text-shadow: 1px 1px #0a2a80;
  white-space: nowrap;
  background: linear-gradient(#3c8cfc 0, #0a5cf0 3px, #0050e0 10px, #0060fc 18px, #0062ff 22px, #0040c0 26px);
`;
const TitleText = styled.h1`
  flex: 1;
  margin: 0 0 0 4px;
  font-size: 14px;
  line-height: 20px;
`;
const CaptionGroup = styled.div`
  display: flex;
  gap: 2px;
`;
const CaptionButton = styled.button<{ $close?: boolean }>`
  display: grid;
  place-items: center;
  width: 21px;
  height: 21px;
  padding: 0;
  border: 1px solid #fff;
  border-radius: 3px;
  background: ${p => (p.$close ? 'radial-gradient(circle at 30% 30%, #f0906c, #d84420 70%)' : 'radial-gradient(circle at 30% 30%, #6c98f8, #2454e0 70%)')};
`;

const MenuBar = styled.nav`
  display: flex;
  align-items: center;
  height: 24px;
  padding: 0 6px 0 3px;
  background: linear-gradient(90deg, #fbfbf8, #ece9d8);
  white-space: nowrap;
`;
const MenuList = styled.div`
  display: flex;
  flex: 1;
  gap: 11px;
  margin-left: 4px;
`;
const MenuItem = styled.button`
  padding: 0;
  border: 0;
  background: none;
  line-height: 16px;
`;
const Key = styled.span`
  font-family: "Liberation Mono", monospace;
  font-size: 11px;
  u { text-underline-offset: 2px; }
`;
const MdiGroup = styled.div`
  display: flex;
  gap: 2px;
`;
const MdiButton = styled.button`
  display: grid;
  place-items: center;
  width: 14px;
  height: 13px;
  padding: 0;
  border: 1px solid #d8d4c4;
  background: #f6f5ee;
`;

/* ---------- toolbars ---------- */

const Grip = styled.i<{ $v?: boolean; $short?: boolean }>`
  flex: none;
  ${p => (p.$v
    ? css`
        width: 34px;
        height: 2px;
        margin: 3px auto 2px;
        max-width: 80%;
        background: repeating-linear-gradient(90deg, #9c9a8c 0 2px, transparent 2px 4px);
      `
    : css`
        width: 2px;
        height: ${p.$short ? 14 : 22}px;
        margin: 0 2px 0 3px;
        background: repeating-linear-gradient(#9c9a8c 0 2px, transparent 2px 4px);
      `)}
`;
const ToolRow = styled.div`
  display: flex;
  height: 34px;
  background: #ece9d8;
`;
const Bar = styled.div<{ $grow?: boolean }>`
  display: flex;
  flex: ${p => (p.$grow ? '1 0 auto' : 'none')};
  align-items: center;
  height: 34px;
  border: 1px solid #fffefa;
  border-right-color: #c8c4b4;
  border-bottom-color: #d4d0c0;
  background: linear-gradient(#f8f7f2, #eae6d6);
`;
const ToolButton = styled.button<{ $on?: boolean; $boxed?: boolean }>`
  display: grid;
  flex: none;
  place-items: center;
  width: 31px;
  height: 31px;
  padding: 0;
  border: ${p => (p.$on ? '1px solid #7c7460' : p.$boxed ? '2px solid #c83848' : '0')};
  border-radius: ${p => (p.$boxed ? 0 : 2)}px;
  background: ${p => (p.$on ? '#fbcb94' : 'none')};
`;
const StartMenuButton = styled.button`
  display: flex;
  align-items: center;
  justify-content: space-between;
  width: 67px;
  height: 31px;
  padding: 0 5px 0 3px;
  border: 0;
  background: none;
`;
const Rule = styled.i<{ $v?: boolean }>`
  flex: none;
  ${p => (p.$v
    ? css`
        height: 6px;
        margin: 0 4px;
        background: linear-gradient(transparent 3px, #c4c0b0 3px 4px, transparent 4px);
      `
    : css`
        width: 6px;
        height: 27px;
        background: linear-gradient(90deg, transparent 3px, #bcb8a8 3px 4px, #fff 4px 5px, transparent 5px);
      `)}
`;
const Caret = styled.i`
  width: 5px;
  height: 3px;
  background: #000;
  clip-path: polygon(0 0, 100% 0, 50% 100%);
`;
const LeftCaret = styled.i`
  width: 3px;
  height: 5px;
  background: #000;
  clip-path: polygon(100% 0, 100% 100%, 0 50%);
`;
const DropButton = styled.button`
  display: grid;
  place-items: center;
  width: 12px;
  height: 31px;
  padding: 0;
  border: 0;
  background: none;
`;
const Overflow = styled.button<{ $w?: number; $end?: boolean }>`
  display: flex;
  flex: none;
  flex-direction: column;
  align-items: center;
  justify-content: ${p => (p.$w ? 'space-between' : 'flex-end')};
  width: ${p => p.$w || 13}px;
  height: 31px;
  padding: 3px 0 6px;
  margin-left: ${p => (p.$end ? 'auto' : '0')};
  border: 0;
  background: none;
`;
const WideOverflow = styled(Overflow)`
  align-items: flex-end;
  padding-right: 5px;
`;
const Chevrons = () => (
  <svg width="8" height="7" viewBox="0 0 8 7" aria-hidden="true">
    <path d="M1 1l2 2.500l-2 2.500M5 1l2 2.500l-2 2.500" fill="none" stroke="#000" strokeWidth="1.300" />
  </svg>
);

/* "|" rule, "v" drop arrow, ">" overflow, ">>n" overflow with chevrons n wide (e: at the end), "*name" pressed */
function Tools({ items }: { items: string[] }) {
  return (
    <>
      {items.map((t, i) => {
        if (t === '|') return <Rule key={i} />;
        if (t === 'v') return <DropButton key={i} aria-label="Options"><Caret /></DropButton>;
        if (t === '>') return <Overflow key={i} aria-label="More"><Caret /></Overflow>;
        if (t.startsWith('>>')) {
          const width = parseInt(t.slice(2), 10);
          const Part = width > 20 ? WideOverflow : Overflow;
          return (
            <Part key={i} $w={width} $end={t.endsWith('e')} aria-label="More">
              <Chevrons /><Caret />
            </Part>
          );
        }
        const on = t[0] === '*';
        const name = on ? t.slice(1) : t;
        return <ToolButton key={i} $on={on} aria-label={name}><Icon name={name} /></ToolButton>;
      })}
    </>
  );
}

const Prompt = styled.div`
  display: flex;
  height: 23px;
  padding: 0 0 3px 2px;
  border-top: 1px solid #9c998a;
  border-bottom: 1px solid #8c897c;
  background: #ece9d8;
  font-weight: 700;
  line-height: 16px;
  white-space: nowrap;
`;
const PromptCell = styled.div<{ $w?: string }>`
  flex: ${p => (p.$w ? `0 0 ${p.$w}` : '1')};
  border-right: 1px solid #c8c4b4;
`;

/* ---------- work area ---------- */

const Main = styled.main`
  display: flex;
  flex: 1;
  min-height: 563px;
`;
const Resource = styled.aside`
  display: flex;
  flex: none;
  flex-direction: column;
  gap: 13px;
  width: 34px;
  padding: 14px 1px 0 6px;
  background: #aca899;
`;
const TabGroup = styled.div`
  display: flex;
  flex-direction: column;
`;
const ResourceTab = styled.button`
  display: grid;
  place-items: center;
  height: 42px;
  padding: 0;
  border: 0;
  border-bottom: 1px solid #bcb8a8;
  border-top: 1px solid #fff;
  background: linear-gradient(90deg, #f8f7f2, #e8e5d8);
`;
const Splitter = styled.div`
  flex: none;
  width: 10px;
  background: #ece9d8;
  border-right: 2px solid #716f64;
  border-left: 1px solid #fff;
`;
const View = styled.section`
  flex: 1;
  min-width: 0;
  overflow: hidden;
  border-top: 1px solid #716f64;
  border-bottom: 2px solid #fffefa;
  background: linear-gradient(#96bcdd 0, #b4cddf 33%, #ccd8e2 55%, #e0e2e6 75%, #e6e6e6 82%);
`;
const Scene = styled.svg`
  display: block;
  width: 100%;
  height: 100%;
`;
const Docks = styled.aside`
  display: flex;
  flex: none;
  gap: 1px;
  width: 82px;
  padding-left: 4px;
  background: linear-gradient(90deg, #f4f2ea, #e8e4d2);
`;
const DockColumn = styled.div<{ $w: number }>`
  display: flex;
  flex-direction: column;
  width: ${p => p.$w}px;
`;
const DockBar = styled.div`
  display: flex;
  flex-direction: column;
  align-items: stretch;
  border: solid #cfcbbb;
  border-width: 0 1px 1px 0;
  background: linear-gradient(90deg, #f8f7f2, #eeebdf);
`;
const DockRow = styled.div`
  display: flex;
  align-items: center;
  justify-content: center;
  position: relative;
`;
const DockDrop = styled.button<{ $center?: boolean }>`
  display: flex;
  align-items: center;
  justify-content: ${p => (p.$center ? 'center' : 'flex-start')};
  height: ${p => (p.$center ? 8 : 13)}px;
  padding: 0 5px;
  border: 0;
  background: none;
`;
const SideDrop = styled(DropButton)`
  position: absolute;
  right: 1px;
  width: 8px;
`;
const Square = styled(ToolButton)`
  width: 25px;
  height: 25px;
  margin: 3px;
`;

const RIM = 'M296 284Q296 279 302 279L640 272Q647 272 648 278L652 516Q652 523 646 524L303 531Q299 531 299 526z';
const GLASS = 'M339 292Q470 270 602 286Q607 287 609 295Q621 390 611 482Q610 486 605 487Q480 511 342 493Q336 492 334 485Q322 400 332 300Q333 293 339 292z';

function Model() {
  return (
    <Scene viewBox="44 142 898 560" preserveAspectRatio="xMinYMin slice" role="img" aria-label="Model view">
      <defs>
        <linearGradient id="mGlass" x1=".55" y1="0" x2=".4" y2="1">
          <stop offset="0" stopColor="#6ba2dc" /><stop offset=".5" stopColor="#74b0f0" /><stop offset="1" stopColor="#80c0ff" />
        </linearGradient>
        <radialGradient id="mGlowL" gradientUnits="userSpaceOnUse" cx="328" cy="480" r="100"><stop offset="0" stopColor="#98d8ff" /><stop offset="1" stopColor="#88c8ff" stopOpacity="0" /></radialGradient>
        <radialGradient id="mGlowR" gradientUnits="userSpaceOnUse" cx="618" cy="480" r="110"><stop offset="0" stopColor="#98d8ff" /><stop offset="1" stopColor="#88c8ff" stopOpacity="0" /></radialGradient>
        <radialGradient id="mDark" gradientUnits="userSpaceOnUse" cx="610" cy="300" r="130"><stop offset="0" stopColor="#6698cc" /><stop offset="1" stopColor="#6698cc" stopOpacity="0" /></radialGradient>
        <linearGradient id="mLeft" gradientUnits="userSpaceOnUse" x1="310" y1="503" x2="322" y2="515"><stop offset="0" stopColor="#43658a" /><stop offset="1" stopColor="#1e2c3a" /></linearGradient>
        <linearGradient id="mRight" gradientUnits="userSpaceOnUse" x1="638" y1="498" x2="628" y2="509"><stop offset="0" stopColor="#659bd0" /><stop offset="1" stopColor="#1e2c3a" /></linearGradient>
        <linearGradient id="mTopR" gradientUnits="userSpaceOnUse" x1="623" y1="278" x2="631" y2="293"><stop offset="0" stopColor="#74aff0" /><stop offset=".5" stopColor="#84c0fa" /><stop offset="1" stopColor="#659bd0" /></linearGradient>
      </defs>
      <path d="M726.500 142V564M728.500 142V556M726.500 620V702M728.500 629V702M44 588.500H696M44 597.500H693M757 588.500H942M760 597.500H942" stroke="#101010" />
      <path d="M727.500 142v110" stroke="#d8b0c0" />
      <path d="M289 539L662 530V537L291 544z" fill="#1e2c3a" />
      <path d="M286 270L658 262L661 532L289 540z" fill="#72aef0" stroke="#1c2c3a" strokeWidth="1.500" />
      <path d="M658 262L661 536" stroke="#1c2830" strokeWidth="2.500" />
      <path d={RIM} fill="#74aff0" />
      <path d="M296 281L332 295Q322 390 335 491L340 494L303 531Q299 530 299 526z" fill="url(#mLeft)" />
      <path d="M648 275L604 289Q622 390 610 487L652 516z" fill="url(#mTopR)" />
      <path d="M652 516L651 450L612 450L606 489L646 524Q652 522 652 516z" fill="url(#mRight)" />
      <path d="M303 531L338 492L608 487L646 524z" fill="#1e2c3a" />
      <path d={GLASS} fill="url(#mGlass)" />
      <path d={GLASS} fill="url(#mGlowL)" />
      <path d={GLASS} fill="url(#mGlowR)" />
      <path d={GLASS} fill="url(#mDark)" stroke="#1c2a38" strokeWidth="1.500" />
      <path d={RIM} fill="none" stroke="#1c2a38" strokeWidth="1.300" />
      <path d="M290.500 504V540" stroke="#e8f0f8" />
      <path d="M290 537v5" stroke="#1010d0" strokeWidth="2" />
      <path d="M290 544h15" stroke="#d81020" strokeWidth="2" />
      <g fontFamily="Liberation Sans" fontSize="10">
        <text x="290" y="489" fill="#d0e4f4">YC</text>
        <text x="288" y="535" fill="#d87858">ZC</text>
        <text x="348" y="544" fill="#e8eef4">XC</text>
      </g>
    </Scene>
  );
}

/* ---------- taskbar ---------- */

const Taskbar = styled.footer`
  display: flex;
  align-items: stretch;
  height: 30px;
  color: #fff;
  white-space: nowrap;
  background: linear-gradient(#1c48b8 0, #4088f4 2px, #245edc 5px, #2460e0 24px, #1a44b0);
`;
const StartButton = styled.button`
  display: flex;
  align-items: center;
  gap: 5px;
  width: 97px;
  padding: 0 0 0 9px;
  border: 0;
  border-radius: 0 10px 10px 0;
  background: linear-gradient(#2c702c 0, #5cac58 3px, #3c943c 8px, #389038 22px, #206820);
  box-shadow: inset -3px 0 4px #245c24;
  color: #fff;
  font: italic 400 18px/24px "Noto Sans CJK SC", sans-serif;
  text-shadow: 1px 1px 1px #184818;
`;
const QuickLaunch = styled.div`
  display: flex;
  align-items: center;
  gap: 6px;
  width: 102px;
  padding-left: 11px;
`;
const BareButton = styled.button`
  display: grid;
  place-items: center;
  padding: 0;
  border: 0;
  background: none;
`;
const MoreQuick = styled(BareButton)`
  width: 12px;
  height: 20px;
  align-items: start;
  color: #a8ccf8;
  font-size: 14px;
  line-height: 10px;
`;
const TaskList = styled.div`
  display: flex;
  flex: 0 1 655px;
  gap: 2px;
  padding: 3px 0 2px;
`;
const Task = styled.button<{ $on?: boolean }>`
  display: flex;
  flex: 1;
  align-items: center;
  gap: 4px;
  min-width: 0;
  padding: 0 0 0 9px;
  border: 0;
  border-radius: 2px;
  color: #fff;
  background: ${p => (p.$on ? '#1c48ac' : 'linear-gradient(#5c98fc, #3c7cf4 4px, #3874ec 20px, #2c64d8)')};
  box-shadow: ${p => (p.$on ? 'inset 1px 1px 2px #10307c' : 'inset -1px -1px 1px #2050b8')};
`;
const LangArea = styled.div`
  display: grid;
  flex: 1;
  place-items: center;
  min-width: 32px;
`;
const Tray = styled.div`
  display: flex;
  align-items: center;
  gap: 2px;
  width: 131px;
  background: linear-gradient(#0c5cb8 0, #28b0f8 2px, #1090e8 6px, #1494ee 24px, #0c64b8);
  border-left: 1px solid #083c80;
`;
const TrayToggle = styled.button`
  display: grid;
  place-items: center;
  width: 17px;
  height: 17px;
  margin-left: -9px;
  padding: 0;
  border: 0;
  border-radius: 50%;
  background: radial-gradient(circle at 40% 30%, #70c8ff, #1470d8);
`;
const Clock = styled.time`
  margin-left: 5px;
  font-family: "Liberation Mono", monospace;
  font-size: 11px;
`;

const MENUS: [string, string][] = [
  ['文件', 'F'], ['编辑', 'E'], ['视图', 'V'], ['插入', 'S'], ['格式', 'R'], ['工具', 'T'],
  ['装配', 'A'], ['信息', 'I'], ['分析', 'L'], ['首选项', 'P'], ['窗口', 'O'],
];
const TABS = [['navAsm', 'navPart'], ['web', 'grad', 'help'], ['clock', 'palette', 'film', 'people']];
const TASKS: [string, string][] = [
  ['word', '碳...'], ['word', '摩 ...'], ['folder', '\\\\c...'], ['fox', '[01...'],
  ['eye', '幻...'], ['logo', '波...'], ['aBox', 'Aut...'], ['printer', 'cop...'],
];
const CURVES = ['bridge', 'join', 'project', 'intersect', 'wrap'];
const EDITS = ['editParam', 'trimCrv', 'trimCor', 'divide', 'length', 'smooth'];
const SNAPS = ['gEnd', 'gMid', 'gCtrl', 'gInt', 'gCen', 'gQuad', 'gPt'];

const DockTool = ({ name }: { name: string }) => (
  <DockRow><ToolButton aria-label={name}><Icon name={name} /></ToolButton></DockRow>
);

export default function App() {
  return (
    <Screen>
      <Global />
      <SharedDefs />
      <TitleBar>
        <Icon name="logo" size={16} />
        <TitleText><Mixed text="波波碌碌 NX 2009.0 - Modeling - [3.prt （修改的） ]" cjk={14} latin={13} /></TitleText>
        <CaptionGroup>
          <CaptionButton aria-label="Minimize"><svg width="13" height="13"><path d="M2 10h6" stroke="#fff" strokeWidth="3" /></svg></CaptionButton>
          <CaptionButton aria-label="Restore"><svg width="13" height="13" fill="none" stroke="#fff"><path d="M4.500 4V2h7v6.500H9" strokeWidth="1.500" /><path d="M1.500 5.500h7v6h-7z" strokeWidth="1.500" /></svg></CaptionButton>
          <CaptionButton $close aria-label="Close"><svg width="13" height="13"><path d="M1.500 1.500l10 10M11.500 1.500l-10 10" stroke="#fff" strokeWidth="2" /></svg></CaptionButton>
        </CaptionGroup>
      </TitleBar>

      <MenuBar>
        <Grip $short />
        <Icon name="part" size={16} />
        <MenuList>
          {MENUS.map(([label, key]) => (
            <MenuItem key={key}><CjkText $size={12}>{label}</CjkText><Key>(<u>{key}</u>)</Key></MenuItem>
          ))}
        </MenuList>
        <MdiGroup>
          <MdiButton aria-label="Minimize document"><svg width="10" height="10"><path d="M2 8h6" stroke="#555" strokeWidth="2" /></svg></MdiButton>
          <MdiButton aria-label="Restore document"><svg width="10" height="10" fill="none" stroke="#555"><path d="M3.500 3V1.500h6v4H8M1.500 4.500h6v4h-6z" /></svg></MdiButton>
          <MdiButton aria-label="Close document"><svg width="10" height="10"><path d="M2 2l6 6M8 2l-6 6" stroke="#555" strokeWidth="2" /></svg></MdiButton>
        </MdiGroup>
      </MenuBar>

      <ToolRow>
        <Bar>
          <Grip />
          <StartMenuButton><Icon name="logo" /><CjkText $size={12}>起始</CjkText><Caret /></StartMenuButton>
          <Tools items={['newDoc', 'open', 'save', '|', 'cut', 'copy', 'paste', '|', 'undo', '|', 'info', '>']} />
        </Bar>
        <Bar>
          <Grip />
          <Tools items={['fit', 'fitGray', 'zoomWin', 'zoom', 'rotate', 'pan', 'persp', '|', 'cube', 'v', 'section', 'v', '>']} />
        </Bar>
        <Bar>
          <Grip />
          <Tools items={['*wcsTorch', 'wcsDyn', 'wcs', 'wcsRot', 'wcsMove', 'wcsTool', 'layer', '>>28']} />
        </Bar>
        <Bar $grow>
          <Grip />
          <Tools items={['measure', 'angle', '>']} />
        </Bar>
      </ToolRow>
      <ToolRow>
        <Bar>
          <Grip />
          <Tools items={['sketch', '|', 'extrude', 'revolve', 'sweep', 'tube', '>>19']} />
        </Bar>
        <Bar>
          <Grip />
          <Tools items={['unite', 'v', 'trimBody', 'v', '|', 'emboss', 'facet', '|', 'blend', 'faceBlend', 'softBlend', 'chamfer', 'shell', 'thread', 'patternBox', 'hole', 'boss', '|', 'replace', 'offset', '|', 'feature', '>']} />
        </Bar>
        <Bar $grow>
          <Grip />
          <Tools items={['ruled', 'curves', 'mesh', 'swept', 'lattice', 'studio', '|', 'trimSheet', '>>16e']} />
        </Bar>
      </ToolRow>

      <Prompt>
        <PromptCell $w="47%"><Mixed text="选择对象并使用 MB3，或者双击某一对象" cjk={13} latin={12} /></PromptCell>
        <PromptCell />
        <PromptCell $w="20px" />
        <PromptCell $w="37px" />
      </Prompt>

      <Main>
        <Resource>
          {TABS.map(group => (
            <TabGroup key={group[0]}>
              {group.map(name => <ResourceTab key={name} aria-label={name}><Icon name={name} /></ResourceTab>)}
            </TabGroup>
          ))}
        </Resource>
        <Splitter />
        <View><Model /></View>
        <Docks>
          <DockColumn $w={44}>
            <DockBar>
              <Grip $v />
              <DockTool name="profile" />
              <DockTool name="spline" />
              <Rule $v />
              <DockTool name="offsetCrv" />
              <DockRow>
                <ToolButton aria-label="poly"><Icon name="poly" /></ToolButton>
                <SideDrop aria-label="Options"><Caret /></SideDrop>
              </DockRow>
              {CURVES.map(n => <DockTool key={n} name={n} />)}
              <DockDrop aria-label="More"><LeftCaret /></DockDrop>
            </DockBar>
            <DockBar>
              <Grip $v />
              {EDITS.map(n => <DockTool key={n} name={n} />)}
              <DockDrop aria-label="More"><LeftCaret /></DockDrop>
            </DockBar>
          </DockColumn>
          <DockColumn $w={33}>
            <DockBar>
              <Grip $v />
              <DockRow><Square $boxed aria-label="filter"><Icon name="filter" size={21} /></Square></DockRow>
              <DockDrop $center aria-label="Options"><LeftCaret /></DockDrop>
              <Rule $v />
              <DockTool name="gunGray" />
              <DockDrop aria-label="More"><LeftCaret /></DockDrop>
            </DockBar>
            <DockBar>
              <Grip $v />
              {SNAPS.map(n => <DockTool key={n} name={n} />)}
              <DockDrop aria-label="More"><LeftCaret /></DockDrop>
            </DockBar>
          </DockColumn>
        </Docks>
      </Main>

      <ToolRow>
        <Bar>
          <Grip />
          <Tools items={['btSpline', 'btSheet', '|', 'btMap', '>']} />
        </Bar>
        <Bar>
          <Grip />
          <Tools items={['*chain', '|', 'line', 'lineAxis', 'linePar', 'lineCross', 'lineTan', 'lineTan2', 'grid', '|', 'arc3', 'arcTan', 'arc3Tan', 'arcCor', '|', 'circ3', 'circTan', 'circBox', 'circRad', '|', 'circPt', 'circR', 'circT', '>']} />
        </Bar>
        <Bar>
          <Grip />
          <Tools items={['dimX', '>']} />
        </Bar>
      </ToolRow>

      <Taskbar>
        <StartButton><Icon name="flag" size={22} />开始</StartButton>
        <QuickLaunch>
          <BareButton aria-label="Desktop"><Icon name="desk" size={16} /></BareButton>
          <BareButton aria-label="Mail"><Icon name="mail" size={18} /></BareButton>
          <BareButton aria-label="Browser"><Icon name="ie" size={18} /></BareButton>
          <MoreQuick aria-label="More">»</MoreQuick>
        </QuickLaunch>
        <TaskList>
          {TASKS.map(([icon, label]) => (
            <Task key={label} $on={icon === 'logo'}><Icon name={icon} size={16} /><span><Mixed text={label} /></span></Task>
          ))}
        </TaskList>
        <LangArea><BareButton aria-label="Input method"><Icon name="keyboard" size={16} /></BareButton></LangArea>
        <Tray>
          <TrayToggle aria-label="Show hidden icons"><svg width="8" height="10"><path d="M6 1L2 5l4 4" fill="none" stroke="#fff" strokeWidth="2" /></svg></TrayToggle>
          <Icon name="kav" size={16} />
          <Icon name="net" size={16} />
          <Icon name="volume" size={16} />
          <Icon name="shield" size={16} />
          <Clock>16:53</Clock>
        </Tray>
      </Taskbar>
    </Screen>
  );
}
